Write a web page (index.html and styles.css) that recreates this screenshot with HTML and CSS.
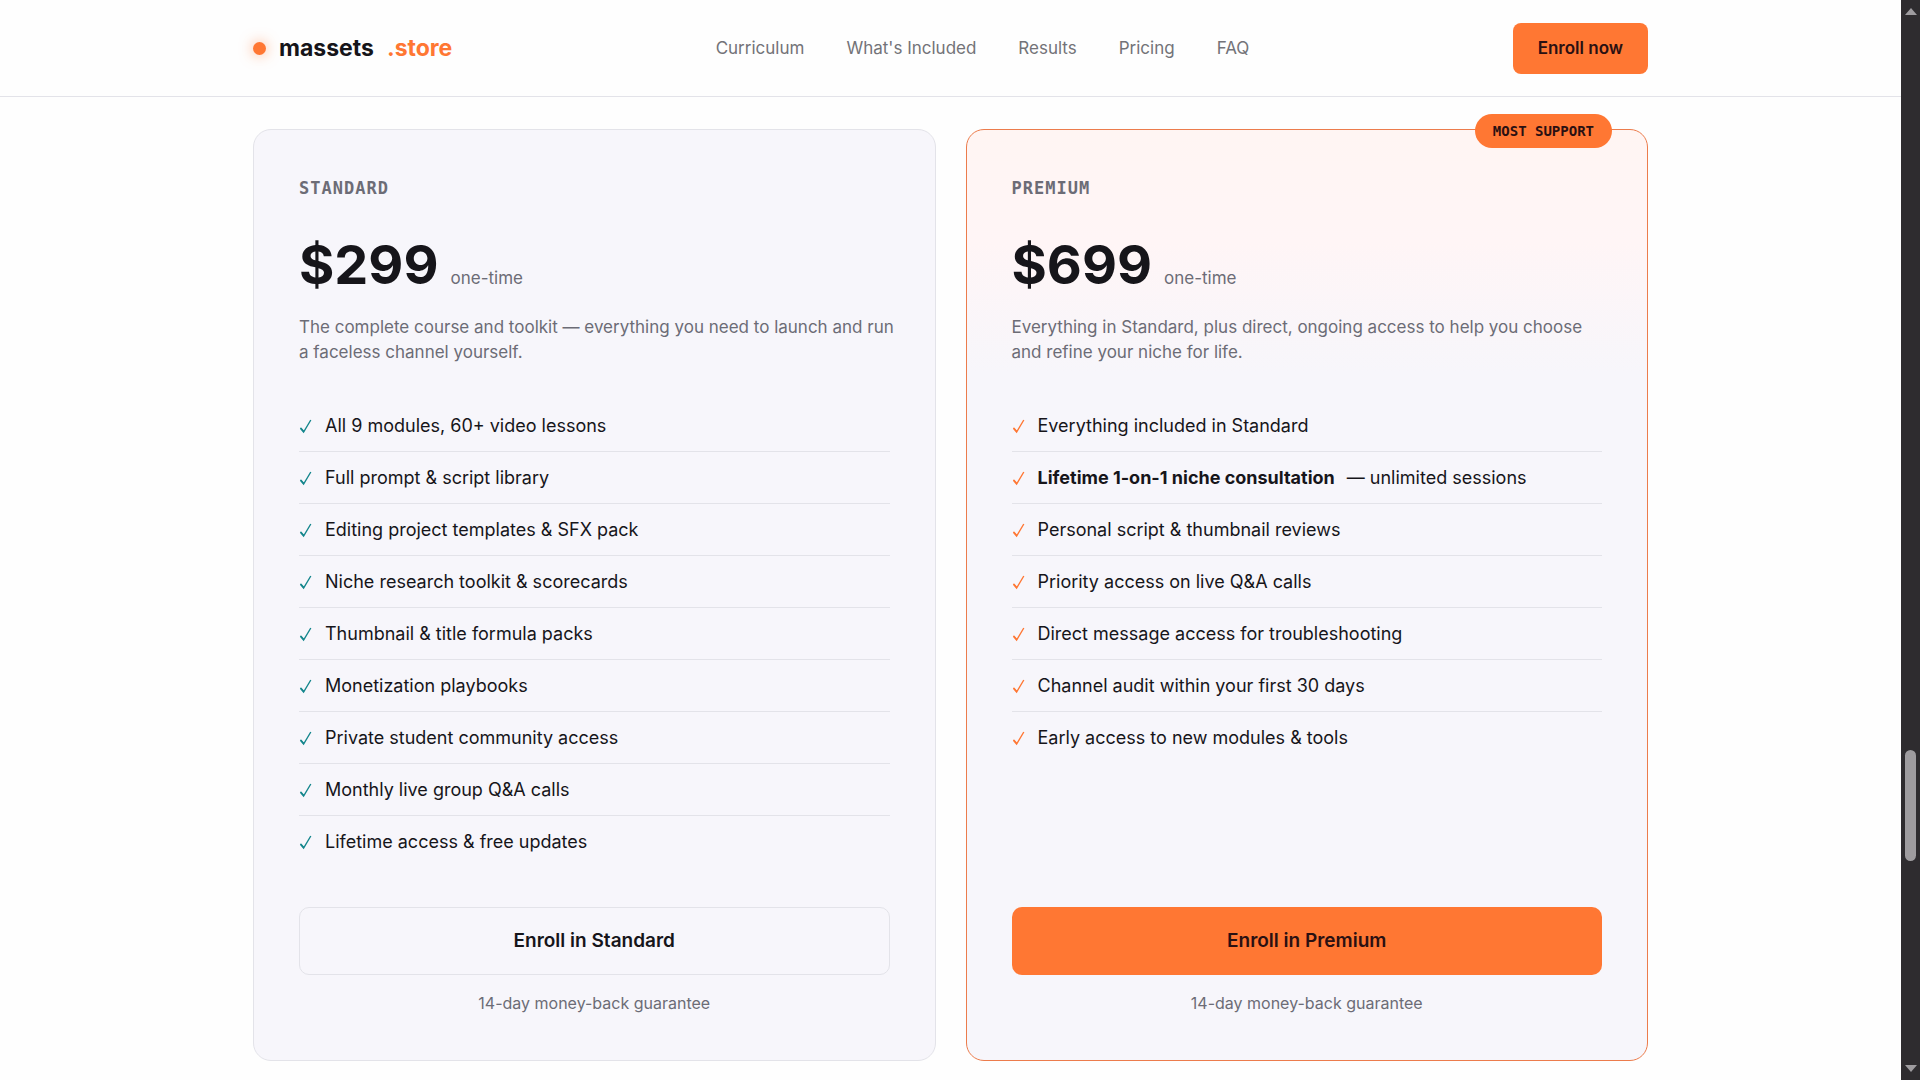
FILE: index.html
```html
<!DOCTYPE html>
<html lang="en">
<head>
<meta charset="utf-8">
<meta name="viewport" content="width=device-width, initial-scale=1">
<title>massets.store</title>
<link rel="stylesheet" href="styles.css">
</head>
<body>
<svg class="defs" aria-hidden="true">
  <symbol id="check" viewBox="0 0 14 16"><path d="M1.4 10.2 4.6 14 11.8 2" fill="none" stroke="currentColor" stroke-width="1.4"/><path d="M1 10 2.2 9.4 5.1 12.8 4.8 14.4Z" fill="currentColor"/></symbol>
</svg>
<header class="site-header">
  <div class="container header-row">
    <a class="logo" href="#"><span class="logo-dot"></span><span>massets</span><span class="logo-tld">.store</span></a>
    <nav class="nav">
      <a href="#curriculum">Curriculum</a>
      <a href="#included">What's Included</a>
      <a href="#results">Results</a>
      <a href="#pricing">Pricing</a>
      <a href="#faq">FAQ</a>
    </nav>
    <button class="btn btn-small btn-primary" type="button">Enroll now</button>
  </div>
</header>
<main class="container plans" id="pricing">
  <article class="plan">
    <h2 class="plan-name">Standard</h2>
    <p class="price"><span class="amount">$299</span><span class="term">one-time</span></p>
    <p class="summary">The complete course and toolkit — everything you need to launch and run a faceless channel yourself.</p>
    <ul class="features">
      <li><svg class="check"><use href="#check"/></svg>All 9 modules, 60+ video lessons</li>
      <li><svg class="check"><use href="#check"/></svg>Full prompt &amp; script library</li>
      <li><svg class="check"><use href="#check"/></svg>Editing project templates &amp; SFX pack</li>
      <li><svg class="check"><use href="#check"/></svg>Niche research toolkit &amp; scorecards</li>
      <li><svg class="check"><use href="#check"/></svg>Thumbnail &amp; title formula packs</li>
      <li><svg class="check"><use href="#check"/></svg>Monetization playbooks</li>
      <li><svg class="check"><use href="#check"/></svg>Private student community access</li>
      <li><svg class="check"><use href="#check"/></svg>Monthly live group Q&amp;A calls</li>
      <li><svg class="check"><use href="#check"/></svg>Lifetime access &amp; free updates</li>
    </ul>
    <button class="btn btn-outline" type="button">Enroll in Standard</button>
    <p class="guarantee">14-day money-back guarantee</p>
  </article>
  <article class="plan plan-premium">
    <span class="badge">Most support</span>
    <h2 class="plan-name">Premium</h2>
    <p class="price"><span class="amount">$699</span><span class="term">one-time</span></p>
    <p class="summary">Everything in Standard, plus direct, ongoing access to help you choose and refine your niche for life.</p>
    <ul class="features">
      <li><svg class="check"><use href="#check"/></svg>Everything included in Standard</li>
      <li><svg class="check"><use href="#check"/></svg><strong>Lifetime 1-on-1 niche consultation</strong> — unlimited sessions</li>
      <li><svg class="check"><use href="#check"/></svg>Personal script &amp; thumbnail reviews</li>
      <li><svg class="check"><use href="#check"/></svg>Priority access on live Q&amp;A calls</li>
      <li><svg class="check"><use href="#check"/></svg>Direct message access for troubleshooting</li>
      <li><svg class="check"><use href="#check"/></svg>Channel audit within your first 30 days</li>
      <li><svg class="check"><use href="#check"/></svg>Early access to new modules &amp; tools</li>
    </ul>
    <button class="btn btn-primary" type="button">Enroll in Premium</button>
    <p class="guarantee">14-day money-back guarantee</p>
  </article>
</main>
<div class="scrollbar" aria-hidden="true">
  <span class="arrow arrow-up"></span>
  <div class="track"><div class="thumb"></div></div>
  <span class="arrow arrow-down"></span>
</div>
</body>
</html>
```
FILE: styles.css
```css
:root {
  --ink: #16151a;
  --muted: #6c6c76;
  --orange: #ff7733;
  --teal: #14868c;
  --line: #e3e3e9;
  --panel: #f7f6fb;
  --mono: "DejaVu Sans Mono", monospace;
}

*,
*::before,
*::after {
  box-sizing: border-box;
}

body {
  margin: 0;
  padding-right: 19px;
  min-height: 100vh;
  background: #fefefe;
  color: var(--ink);
  font: 18px/28px Inter, sans-serif;
}

h2,
p,
ul {
  margin: 0;
  padding: 0;
}

a {
  color: inherit;
  text-decoration: none;
}

.defs {
  position: absolute;
  width: 0;
  height: 0;
}

.container {
  width: 100%;
  max-width: 1459px;
  margin: 0 auto;
  padding: 0 32px;
}

.site-header {
  border-bottom: 1px solid var(--line);
}

.header-row {
  display: flex;
  align-items: center;
  justify-content: space-between;
  height: 96px;
}

.logo {
  display: flex;
  align-items: center;
  gap: 13px;
  font-size: 23px;
  font-weight: 700;
}

.logo-dot {
  width: 13px;
  height: 13px;
  border-radius: 50%;
  background: var(--orange);
  box-shadow: 0 0 14px rgba(255, 119, 51, 0.6);
}

.logo-tld {
  color: var(--orange);
}

.nav {
  display: flex;
  gap: 42px;
  color: #737378;
  font-size: 17px;
}

.btn {
  width: 100%;
  height: 68px;
  border: 1px solid transparent;
  border-radius: 10px;
  color: var(--ink);
  font: 600 19px/28px Inter, sans-serif;
  cursor: pointer;
}

.btn-small {
  width: auto;
  height: 51px;
  padding: 0 24px;
  border-radius: 8px;
  font-size: 17px;
}

.btn-primary {
  background: var(--orange);
  color: #2a1012;
}

.btn-outline {
  border-color: var(--line);
  background: transparent;
}

.plans {
  display: grid;
  grid-template-columns: 1fr 1fr;
  gap: 30px;
  margin-top: 32px;
}

.plan {
  position: relative;
  display: flex;
  flex-direction: column;
  padding: 45px;
  border: 1px solid var(--line);
  border-radius: 18px;
  background: var(--panel);
}

.plan-premium {
  border-color: #ec7c4c;
  background: linear-gradient(#fff5f3, #fff5f6 12%, var(--panel) 26%);
}

.badge {
  position: absolute;
  top: -16px;
  right: 35px;
  padding: 0 18px;
  border-radius: 17px;
  background: var(--orange);
  color: #2a1012;
  font: 700 14px/34px var(--mono);
  text-transform: uppercase;
}

.plan-name {
  color: var(--muted);
  font: 700 17px/26px var(--mono);
  letter-spacing: 1px;
  text-transform: uppercase;
}

.price {
  display: flex;
  align-items: baseline;
  gap: 12px;
  margin-top: 19px;
  color: var(--muted);
  font-size: 17px;
}

.amount {
  color: var(--ink);
  font-size: 54px;
  font-weight: 700;
  line-height: 90px;
}

.summary {
  margin: 5px -8px 0 0;
  color: var(--muted);
  font-size: 17px;
  line-height: 25px;
}

.features {
  margin: 35px 0 40px;
  list-style: none;
}

.features li {
  display: flex;
  align-items: center;
  gap: 12px;
  height: 51px;
}

.features li + li {
  height: 52px;
  border-top: 1px solid var(--line);
}

.check {
  width: 14px;
  height: 16px;
  color: var(--teal);
}

.plan-premium .check {
  color: var(--orange);
}

.plan .btn {
  margin-top: auto;
}

.guarantee {
  margin-top: 16px;
  color: var(--muted);
  font-size: 16px;
  line-height: 24px;
  text-align: center;
}

.scrollbar {
  position: fixed;
  top: 0;
  right: 0;
  bottom: 0;
  display: flex;
  flex-direction: column;
  align-items: center;
  width: 19px;
  padding: 8px 0;
  background: #2e2c2f;
}

.track {
  flex: 1;
  padding-top: 735px;
}

.thumb {
  width: 11px;
  height: 111px;
  border-radius: 6px;
  background: #9e9c9f;
}

.arrow {
  border: 6px solid transparent;
}

.arrow-up {
  border-top: 0;
  border-bottom: 7px solid #9e9c9f;
}

.arrow-down {
  border-top: 7px solid #9e9c9f;
  border-bottom: 0;
}
```
